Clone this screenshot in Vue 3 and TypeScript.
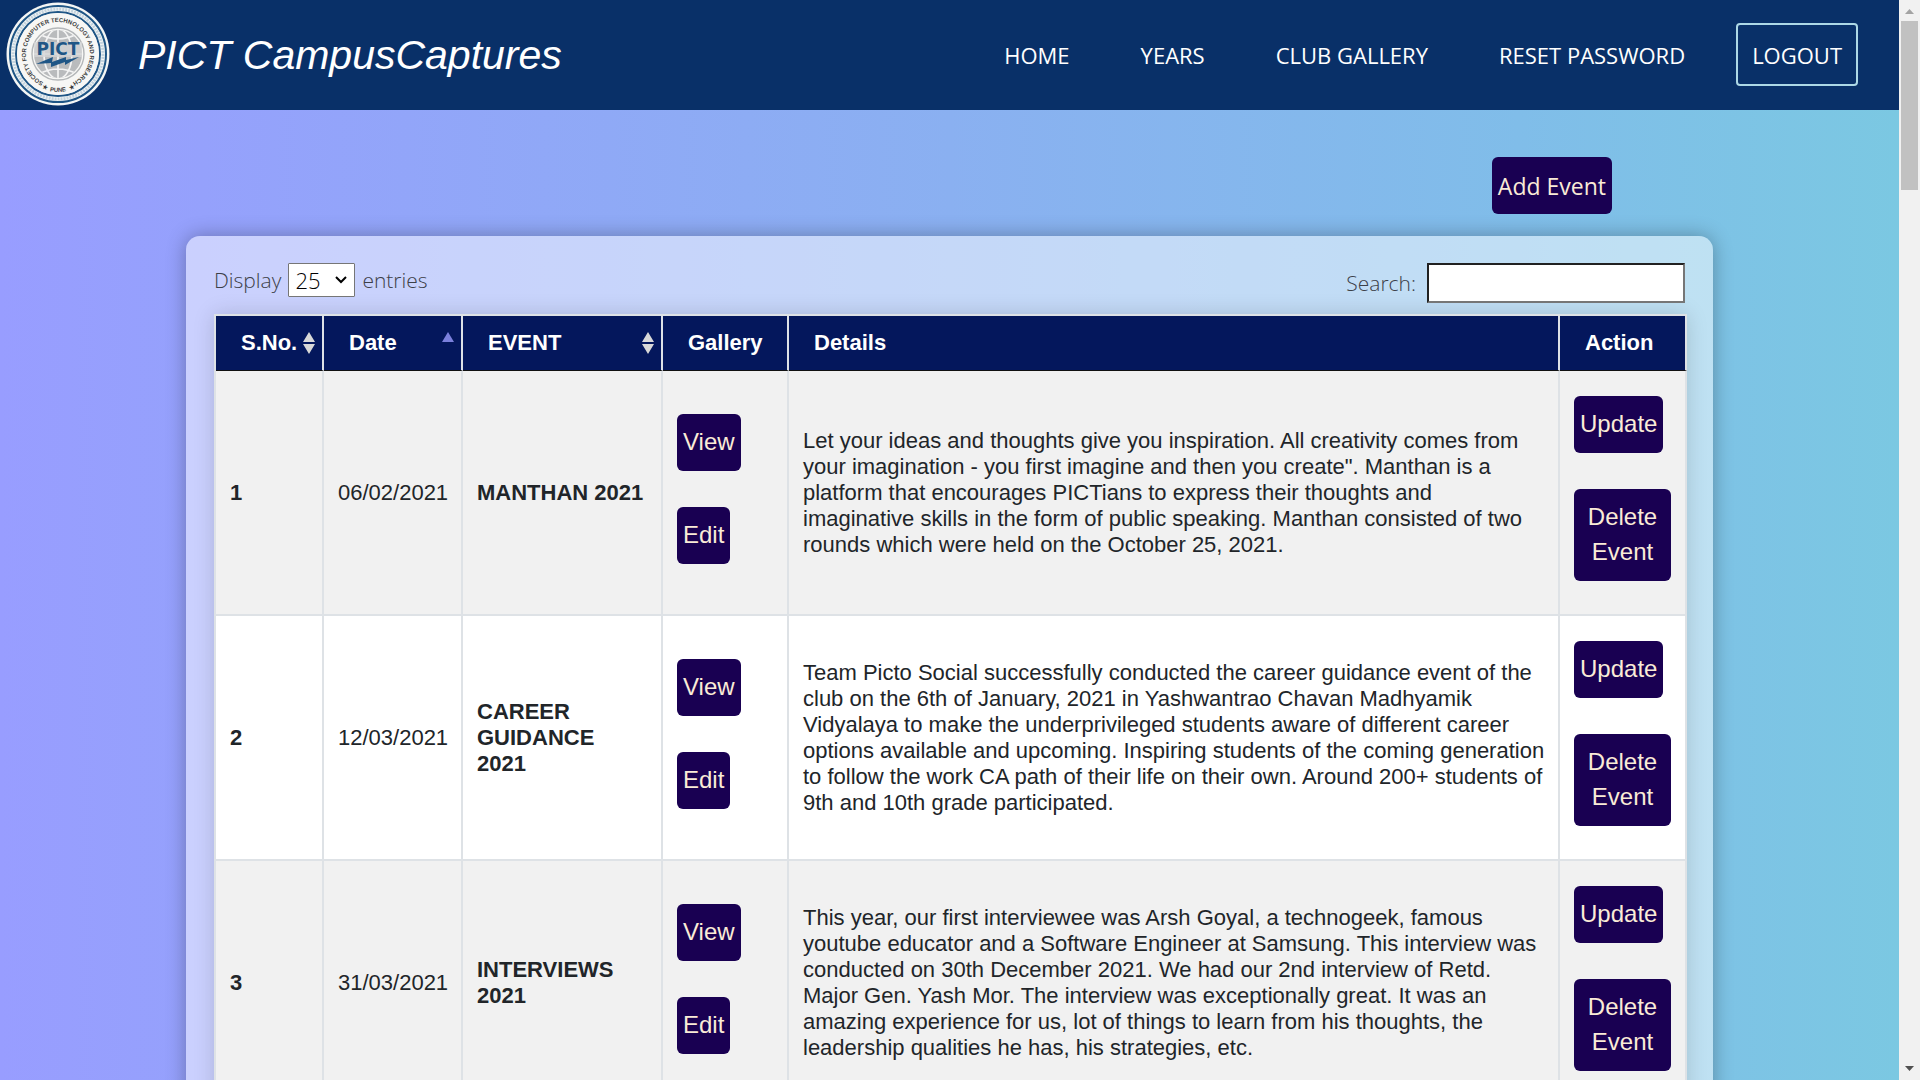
<script setup lang="ts">
interface ClubEvent {
  id: number
  date: string
  name: string
  details: string
}

const links: string[] = ['HOME', 'YEARS', 'CLUB GALLERY', 'RESET PASSWORD']

const events: ClubEvent[] = [
  {
    id: 1,
    date: '06/02/2021',
    name: 'MANTHAN 2021',
    details:
      'Let your ideas and thoughts give you inspiration. All creativity comes from your imagination - you first imagine and then you create". Manthan is a platform that encourages PICTians to express their thoughts and imaginative skills in the form of public speaking. Manthan consisted of two rounds which were held on the October 25, 2021.',
  },
  {
    id: 2,
    date: '12/03/2021',
    name: 'CAREER GUIDANCE 2021',
    details:
      'Team Picto Social successfully conducted the career guidance event of the club on the 6th of January, 2021 in Yashwantrao Chavan Madhyamik Vidyalaya to make the underprivileged students aware of different career options available and upcoming. Inspiring students of the coming generation to follow the work CA path of their life on their own. Around 200+ students of 9th and 10th grade participated.',
  },
  {
    id: 3,
    date: '31/03/2021',
    name: 'INTERVIEWS 2021',
    details:
      'This year, our first interviewee was Arsh Goyal, a technogeek, famous youtube educator and a Software Engineer at Samsung. This interview was conducted on 30th December 2021. We had our 2nd interview of Retd. Major Gen. Yash Mor. The interview was exceptionally great. It was an amazing experience for us, lot of things to learn from his thoughts, the leadership qualities he has, his strategies, etc.',
  },
]
</script>

<template>
  <div class="window">
    <div class="page">
      <header class="navbar">
        <svg class="logo" viewBox="0 0 104 104" role="img" aria-label="PICT">
          <defs>
            <path id="ring-top" d="M52 84A32 32 0 0 1 52 20A32 32 0 0 1 52 84" />
            <path id="ring-low" d="M14 52A38 38 0 0 0 90 52" />
            <clipPath id="globe-clip"><circle cx="52" cy="52" r="24" /></clipPath>
          </defs>
          <circle cx="52" cy="52" r="51.5" fill="#f4f6f5" />
          <circle cx="52" cy="52" r="48" fill="none" stroke="#1f5686" stroke-width="2" />
          <circle cx="52" cy="52" r="45" fill="none" stroke="#c3d3de" stroke-width="3" stroke-dasharray="2 1" />
          <circle cx="52" cy="52" r="42" fill="none" stroke="#1f5686" stroke-width="2" />
          <circle cx="52" cy="52" r="41" fill="#f7f7f5" />
          <circle cx="52" cy="52" r="26" fill="none" stroke="#b3b6b8" stroke-width="1.4" />
          <circle cx="52" cy="52" r="24" fill="#b9bbbd" />
          <g clip-path="url(#globe-clip)" fill="none" stroke="#f4f4f4" stroke-width="1.7">
            <path d="M52 27V77M27 52H77M33 32Q52 42 71 32M33 72Q52 62 71 72" />
            <ellipse cx="52" cy="52" rx="14" ry="25" />
          </g>
          <rect x="28" y="40" width="48" height="15" fill="#d3d5d6" opacity=".8" />
          <text x="52" y="53" text-anchor="middle" class="logo-name">PICT</text>
          <path d="M30 62L47 55L46 60L60 55L60 58L73 55L59 63L59 60L45 65L45 61Z" fill="#1f5686" />
          <text class="logo-ring">
            <textPath href="#ring-top" startOffset="50%" text-anchor="middle">SOCIETY FOR COMPUTER TECHNOLOGY AND RESEARCH</textPath>
          </text>
          <text class="logo-ring">
            <textPath href="#ring-low" startOffset="50%" text-anchor="middle">★&nbsp;&nbsp;PUNE&nbsp;&nbsp;★</textPath>
          </text>
        </svg>
        <h1 class="brand">PICT CampusCaptures</h1>
        <nav class="links">
          <a v-for="link in links" :key="link" href="#">{{ link }}</a>
          <a href="#" class="logout">LOGOUT</a>
        </nav>
      </header>

      <main>
        <div class="toolbar">
          <button type="button" class="btn btn-add">Add Event</button>
        </div>

        <section class="card">
          <div class="controls">
            <label class="length">
              Display
              <select>
                <option>10</option>
                <option selected>25</option>
                <option>50</option>
              </select>
              entries
            </label>
            <label class="search">Search: <input type="search" /></label>
          </div>

          <table>
            <colgroup>
              <col class="c-no" />
              <col class="c-date" />
              <col class="c-event" />
              <col class="c-gallery" />
              <col />
              <col class="c-action" />
            </colgroup>
            <thead>
              <tr>
                <th scope="col">
                  <div class="head">S.No.
                    <svg class="sort" viewBox="0 0 12 22"><path d="M6 0L12 10H0ZM0 12H12L6 22Z" fill="#d8d8d8" /></svg>
                  </div>
                </th>
                <th scope="col">
                  <div class="head">Date
                    <svg class="sort" viewBox="0 0 12 22"><path d="M6 0L12 10H0Z" fill="#7b80dc" /></svg>
                  </div>
                </th>
                <th scope="col">
                  <div class="head">EVENT
                    <svg class="sort" viewBox="0 0 12 22"><path d="M6 0L12 10H0ZM0 12H12L6 22Z" fill="#d8d8d8" /></svg>
                  </div>
                </th>
                <th scope="col">Gallery</th>
                <th scope="col">Details</th>
                <th scope="col">Action</th>
              </tr>
            </thead>
            <tbody>
              <tr v-for="event in events" :key="event.id">
                <td class="strong">{{ event.id }}</td>
                <td>{{ event.date }}</td>
                <td class="strong">{{ event.name }}</td>
                <td>
                  <div class="stack">
                    <button type="button" class="btn">View</button>
                    <button type="button" class="btn">Edit</button>
                  </div>
                </td>
                <td>{{ event.details }}</td>
                <td>
                  <div class="stack">
                    <button type="button" class="btn">Update</button>
                    <button type="button" class="btn">Delete Event</button>
                  </div>
                </td>
              </tr>
            </tbody>
          </table>
        </section>
      </main>
    </div>

    <div class="scrollbar" aria-hidden="true">
      <svg viewBox="0 0 21 21"><path d="M10.500 9L15 14H6Z" fill="#a3a3a3" /></svg>
      <div class="thumb"></div>
      <svg class="down" viewBox="0 0 21 21"><path d="M6 7H15L10.500 12Z" fill="#505050" /></svg>
    </div>
  </div>
</template>

<style>
body {
  overflow: hidden;
}
</style>

<style scoped>
* {
  box-sizing: border-box;
}

.window {
  display: flex;
  height: 100vh;
  overflow: hidden;
  font-family: "Liberation Sans", Arial, sans-serif;
  font-size: 22px;
  color: #212529;
}

.page {
  flex: 1;
  min-width: 0;
  background: linear-gradient(90deg, #989dff 0%, #8ab0f1 50%, #80bde9 80%, #7bc8e2 100%);
}

.navbar {
  display: flex;
  align-items: center;
  height: 110px;
  padding: 0 41px 2px 6px;
  background: #093068;
}

.logo {
  width: 104px;
  height: 104px;
  flex: none;
}

.logo-name {
  font: bold 17px "DejaVu Sans", sans-serif;
  fill: #1f5686;
}

.logo-ring {
  font: bold 6px "Liberation Sans", Arial, sans-serif;
  fill: #3b3d40;
}

.brand {
  margin: 0 0 0 28px;
  padding-top: 2px;
  font-size: 41px;
  line-height: 50px;
  font-weight: 400;
  font-style: italic;
  color: #fff;
  white-space: nowrap;
}

.links {
  display: flex;
  align-items: center;
  gap: 71px;
  margin-left: auto;
  font-family: "Open Sans", "Noto Sans", sans-serif;
  white-space: nowrap;
}

.links a {
  padding: 2px 0 0;
  color: #fff;
  text-decoration: none;
  line-height: 33px;
}

.links .logout {
  margin-left: -20px;
  padding: 14px 14px 12px;
  border: 2px solid #add8e6;
  border-radius: 4px;
}

.toolbar {
  display: flex;
  justify-content: flex-end;
  padding: 47px 287px 22px 0;
}

.btn {
  padding: 10px 6px 12px;
  border: 0;
  border-radius: 6px;
  background: #190052;
  color: #faebd7;
  font: 24px/35px "Liberation Sans", Arial, sans-serif;
}

.btn-add {
  padding: 12px 6px 10px;
  font-family: "Open Sans", "Noto Sans", sans-serif;
  font-size: 23px;
}

.card {
  margin: 0 186px;
  padding: 27px 26px 28px 28px;
  border-radius: 14px;
  background: rgba(255, 255, 255, 0.5);
  box-shadow: 0 0 20px rgba(0, 0, 0, 0.3);
}

.controls {
  display: flex;
  justify-content: space-between;
  align-items: flex-start;
  height: 51px;
  padding-right: 2px;
  font-family: "Open Sans", "Noto Sans", sans-serif;
  font-size: 21px;
  color: #3c4048;
}

.length,
.search {
  display: flex;
  align-items: center;
  font-weight: 300;
}

.length {
  gap: 7px;
}

.search {
  gap: 11px;
}

select {
  width: 67px;
  height: 34px;
  padding: 0 0 0 6px;
  border: 1px solid #767676;
  border-radius: 1px;
  appearance: none;
  background: #fff url("data:image/svg+xml,%3Csvg xmlns='http://www.w3.org/2000/svg' width='14' height='10'%3E%3Cpath d='M2 2L7 7L12 2' fill='none' stroke='%23000' stroke-width='2'/%3E%3C/svg%3E") no-repeat right 6px center;
  color: #000;
  font: 300 22px "Open Sans", "Noto Sans", sans-serif;
}

input {
  width: 258px;
  height: 40px;
  border: 2px inset #767676;
  background: #fff;
  font: inherit;
}

table {
  width: 100%;
  table-layout: fixed;
  border-collapse: separate;
  border-spacing: 0;
  border: solid #dee2e6;
  border-width: 2px 0 0 2px;
  box-shadow: 0 0 20px rgba(0, 0, 0, 0.15);
  line-height: 26px;
}

.c-no {
  width: 108px;
}

.c-date {
  width: 139px;
}

.c-event {
  width: 200px;
}

.c-gallery {
  width: 126px;
}

.c-action {
  width: 127px;
}

th {
  padding: 14px 0 14px 25px;
  border-right: 2px solid #dee2e6;
  border-bottom: 1px solid #111;
  background: #04175c;
  color: #fff;
  text-align: left;
}

.head {
  display: flex;
  align-items: center;
  justify-content: space-between;
  padding-right: 7px;
}

.sort {
  width: 12px;
  height: 22px;
  flex: none;
}

td {
  padding: 0 12px 0 14px;
  border-right: 2px solid #dee2e6;
  border-bottom: 2px solid #dee2e6;
  background: #fff;
  vertical-align: middle;
}

tbody tr:nth-child(odd) td {
  background: #f1f1f1;
}

.strong {
  font-weight: 700;
}

.stack {
  display: flex;
  flex-direction: column;
  align-items: flex-start;
  gap: 36px;
  padding: 25px 2px 33px 0;
}

.scrollbar {
  display: flex;
  flex-direction: column;
  width: 21px;
  background: #f1f1f1;
}

.scrollbar svg {
  width: 21px;
  height: 21px;
}

.thumb {
  height: 169px;
  margin: 0 2px;
  background: #c1c1c1;
}

.scrollbar .down {
  margin-top: auto;
}
</style>
